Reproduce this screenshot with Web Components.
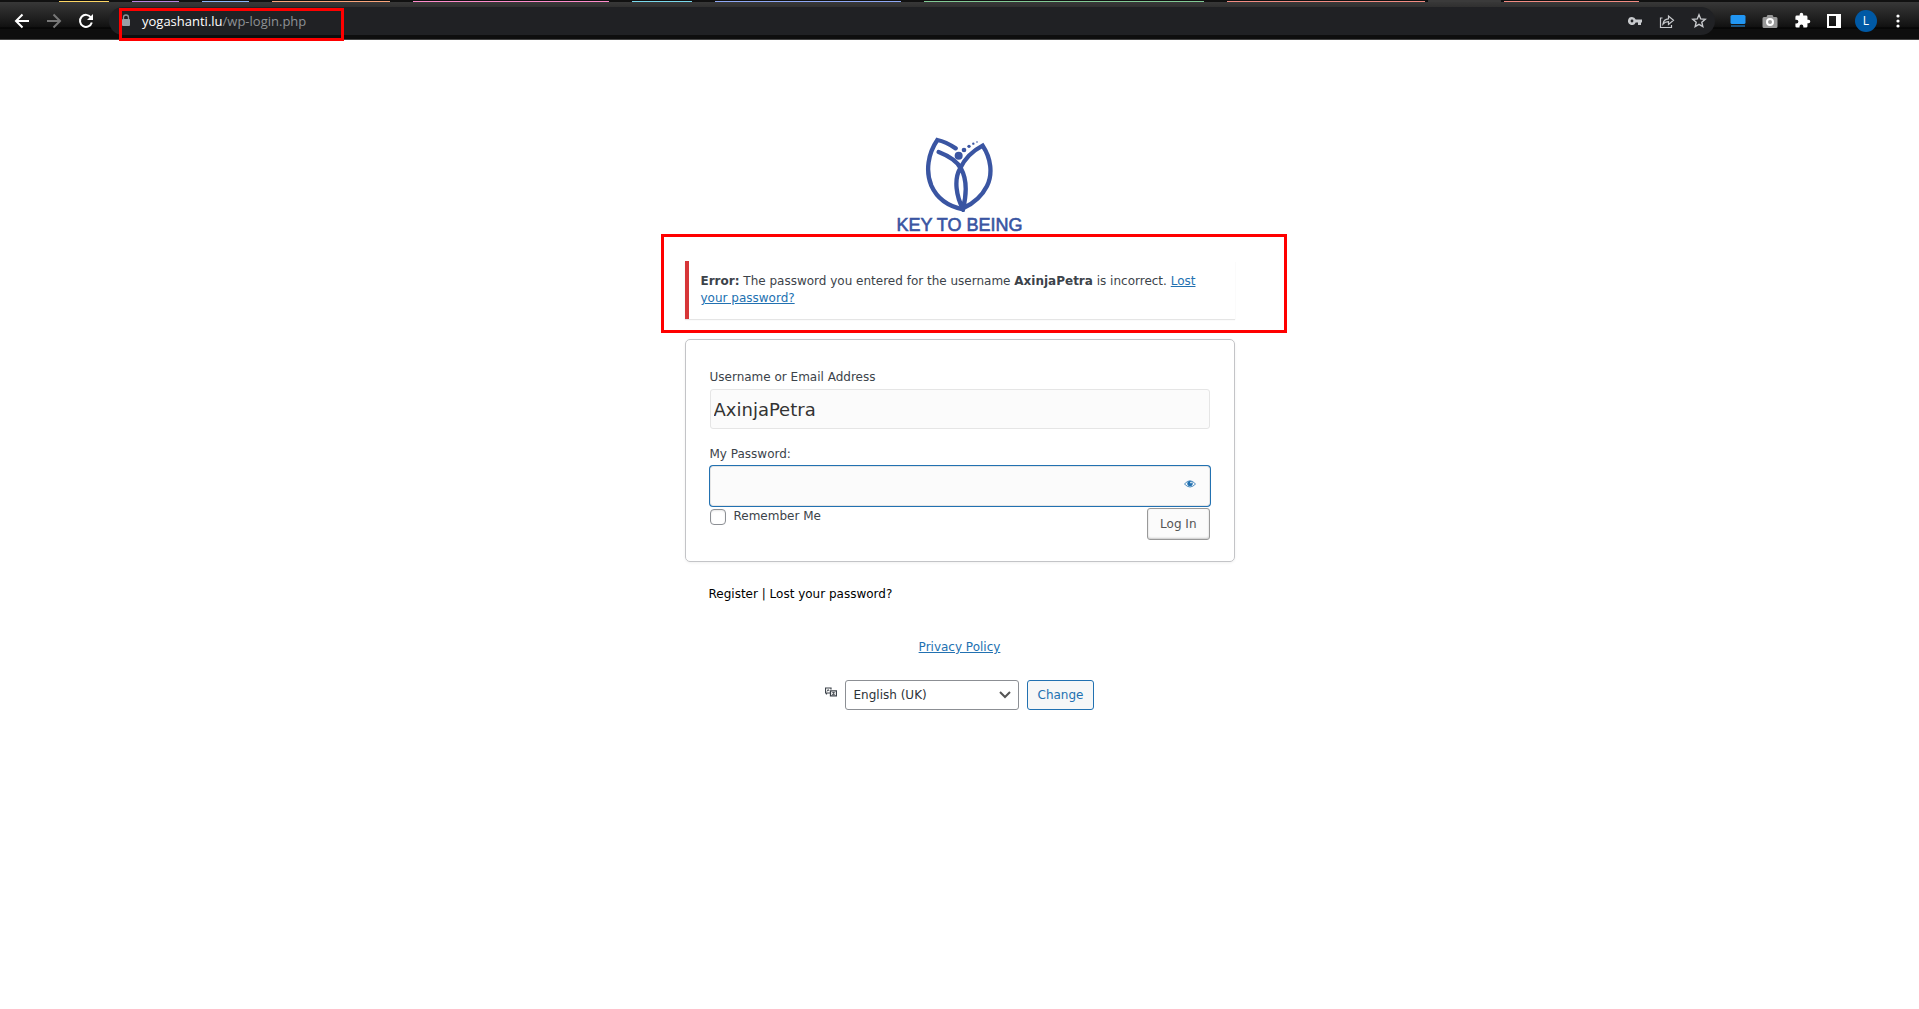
<!DOCTYPE html>
<html lang="en-GB">
<head>
<meta charset="utf-8">
<title>Log In</title>
<style>
	body {
		margin: 0;
		background: #fff;
		color: #3c434a;
		font: 12px/17px "DejaVu Sans", Verdana, sans-serif;
	}
</style>
</head>
<body>
<browser-bar></browser-bar>
<login-page></login-page>

<template id="browser-bar">
	<style>
		:host {
			display: block;
			position: relative;
			background: linear-gradient(#3b3b3b, #111 27px, #000 28px, #0e0e0e 29px);
			border-bottom: 1px solid #444;
		}
		.tabs {
			display: flex;
			gap: 23px;
			height: 2px;
			padding: 0 280px 0 59px;
			background: #111;
		}
		.tabs i { border-bottom: 1px solid var(--c); }
		.tabs .current { background: #3b3b3b; box-shadow: 20px 0 #3b3b3b, -20px 0 #3b3b3b; }
		.bar {
			display: flex;
			align-items: center;
			height: 37px;
			padding: 0 5px 0 12px;
		}
		button {
			display: flex;
			align-items: center;
			justify-content: center;
			width: 32px;
			height: 28px;
			flex: none;
			padding: 0;
			border: 0;
			background: none;
			color: #fff;
		}
		button:first-child { margin-left: -6px; }
		.omnibox {
			display: flex;
			align-items: center;
			flex: 1;
			height: 28px;
			margin: 0 7px;
			padding-left: 11px;
			border-radius: 14px;
			background: #202124;
			color: #c8cacd;
		}
		.omnibox button { color: #c8cacd; }
		.url {
			flex: 1;
			margin-left: 10px;
			color: #8d9195;
			font: 13px/18px "Open Sans", sans-serif;
		}
		.url b { color: #fff; font-weight: 400; }
		.avatar span {
			width: 22px;
			border-radius: 11px;
			background: #0059a5;
			font: 12px/22px "Open Sans", sans-serif;
		}
		.mark {
			position: absolute;
			left: 119px;
			top: 8px;
			width: 219px;
			height: 27px;
			border: 3px solid #f00;
		}
		svg { display: block; }
	</style>
	<div class="tabs">
		<i style="flex:50;--c:#fdd663"></i>
		<i style="flex:47;--c:#b583e0"></i>
		<i style="flex:47;--c:#8ab4f8"></i>
		<i style="flex:119;--c:#fba57b"></i>
		<i style="flex:196;--c:#ff8bcb"></i>
		<i style="flex:61;--c:#78d9ec"></i>
		<i style="flex:186;--c:#8ea8f5"></i>
		<i style="flex:281;--c:#81c995"></i>
		<i style="flex:198;--c:#f28b82"></i>
		<i class="current" style="flex:34;--c:#3b3b3b"></i>
		<i style="flex:135;--c:#f28b82"></i>
	</div>
	<div class="bar">
		<button aria-label="Back"><svg width="16" height="16" viewBox="0 0 16 16" fill="none" stroke="currentColor" stroke-width="2"><path d="M15 8H2M8.500 1.500L2 8l6.500 6.500"/></svg></button>
		<button aria-label="Forward" style="color:#777"><svg width="16" height="16" viewBox="0 0 16 16" fill="none" stroke="currentColor" stroke-width="2"><path d="M1 8h13M7.500 1.500L14 8l-6.500 6.500"/></svg></button>
		<button aria-label="Reload"><svg width="16" height="16" viewBox="0 0 16 16"><path d="M13 4.500A6 6 0 1 0 13.800 9.500" fill="none" stroke="currentColor" stroke-width="2"/><path d="M15 1v6H9z" fill="currentColor"/></svg></button>
		<div class="omnibox">
			<svg width="12" height="14" viewBox="0 0 12 14"><path d="M3.500 6V3.500a2.500 2.500 0 0 1 5 0V6" fill="none" stroke="#8f9499" stroke-width="1.300"/><rect x="2" y="5" width="8" height="7" rx="1" fill="#9aa0a6"/></svg>
			<span class="url"><b>yogashanti.lu</b>/wp-login.php</span>
			<button aria-label="Passwords"><svg width="14" height="8" viewBox="0 0 14 8" fill="currentColor"><path fill-rule="evenodd" d="M4 0a4 4 0 1 0 3.700 5.400H10V8h3V5.400h1V2.600H7.700A4 4 0 0 0 4 0zm0 2.600a1.400 1.400 0 1 1 0 2.800 1.400 1.400 0 0 1 0-2.800z"/></svg></button>
			<button aria-label="Share"><svg width="16" height="16" viewBox="0 0 16 16" fill="none" stroke="currentColor" stroke-width="1.200"><path d="M3.500 5H1.500v9.500h11V12M4 11c.5-3.500 2.500-5 5.500-5.200V3l5 4.300-5 4.200V8.700c-2.500 0-4 .6-5.500 2.300z"/></svg></button>
			<button aria-label="Bookmark"><svg width="16" height="16" viewBox="0 0 16 16" fill="none" stroke="currentColor" stroke-width="1.400"><path d="M8 1.800l1.700 4.100 4.500.4-3.400 2.900 1 4.400L8 11.300l-3.800 2.300 1-4.400-3.400-2.900 4.500-.4z"/></svg></button>
		</div>
		<button aria-label="Screen extension"><svg width="16" height="12" viewBox="0 0 16 12" fill="#2196f3"><rect x=".5" width="15" height="9" rx="1.500"/><path d="M1 10.500h14v1H1z"/></svg></button>
		<button aria-label="Screenshot"><svg width="16" height="14" viewBox="0 0 16 14"><path d="M2 3h2.500l1-2h5l1 2H14a1.500 1.500 0 0 1 1.500 1.500v8A1.500 1.500 0 0 1 14 14H2a1.500 1.500 0 0 1-1.500-1.500v-8A1.500 1.500 0 0 1 2 3z" fill="#999"/><circle cx="8" cy="8" r="3" fill="#999" stroke="#fff" stroke-width="2"/></svg></button>
		<button aria-label="Extensions"><svg width="17" height="17" viewBox="0 0 24 24" fill="currentColor"><path d="M20.500 11H19V7a2 2 0 0 0-2-2h-4V3.500a2.500 2.500 0 0 0-5 0V5H4a2 2 0 0 0-2 2v3.800h1.500a2.700 2.700 0 0 1 0 5.400H2V20a2 2 0 0 0 2 2h3.800v-1.500a2.700 2.700 0 0 1 5.400 0V22H17a2 2 0 0 0 2-2v-4h1.500a2.500 2.500 0 0 0 0-5z"/></svg></button>
		<button aria-label="Side panel"><svg width="14" height="14" viewBox="0 0 14 14"><path fill="currentColor" fill-rule="evenodd" d="M0 0h14v14H0zM2 2v10h7V2z"/></svg></button>
		<button class="avatar" aria-label="Profile"><span>L</span></button>
		<button aria-label="Menu"><svg width="4" height="14" viewBox="0 0 4 14" fill="currentColor"><circle cx="2" cy="2" r="1.600"/><circle cx="2" cy="7" r="1.600"/><circle cx="2" cy="12" r="1.600"/></svg></button>
	</div>
	<div class="mark"></div>
</template>

<template id="site-logo">
	<style>
		:host {
			display: flex;
			flex-direction: column;
			align-items: center;
			color: #3a55a2;
			font: 18px/20px "Liberation Sans", Arial, sans-serif;
			-webkit-text-stroke: 0.6px;
		}
		svg { display: block; margin: 0 2px 3px 0; }
	</style>
	<svg width="68" height="76" viewBox="165 50 204 228" fill="none" stroke="currentColor" stroke-width="13" stroke-linecap="round">
		<path d="M257 87C242 77 222 66 202 62C174 103 166 155 184 199C204 244 244 263 279 270"/>
		<path d="M206 98C237 110 262 126 273 148C290 178 291 220 279 269C259 232 251 181 270 148C284 118 309 94 338 79C363 116 369 164 351 200C335 232 307 254 279 267"/>
		<g fill="currentColor" stroke="none"><circle cx="266" cy="109" r="12"/><circle cx="282" cy="92" r="7"/><circle cx="297" cy="81" r="5"/><circle cx="310" cy="73" r="3.500"/><circle cx="321" cy="68" r="2.500"/></g>
	</svg>
	<span><slot></slot></span>
</template>

<template id="login-notice">
	<style>
		:host {
			display: block;
			position: relative;
			padding: 12px;
			border-left: 4px solid #d63638;
			background: #fff;
			box-shadow: 0 1px 1px rgba(0, 0, 0, .1);
		}
		.mark {
			position: absolute;
			inset: -27px -52px -14px -28px;
			border: 3px solid #f00;
		}
	</style>
	<slot></slot>
	<div class="mark"></div>
</template>

<template id="login-field">
	<style>
		:host { display: block; position: relative; }
		label { display: block; margin-bottom: 3px; }
		input {
			display: block;
			box-sizing: border-box;
			width: 100%;
			height: 40px;
			padding: 0 3px;
			border: 1px solid #e5e5e5;
			border-radius: 3px;
			outline: 0;
			background: #fbfbfb;
			color: #333;
			font: 18px/24px "DejaVu Sans", Verdana, sans-serif;
		}
		:host([active]) input { box-shadow: 0 0 0 1px #2271b1; }
		/* reveal button sits on top of the password box */
		::slotted(button) {
			position: absolute;
			right: 0;
			bottom: 2px;
			width: 40px;
			height: 40px;
			padding: 0;
			border: 0;
			background: none;
			color: #2271b1;
		}
	</style>
	<label for="input"></label>
	<input id="input">
	<slot></slot>
</template>

<template id="login-form">
	<style>
		form {
			display: block;
			padding: 29px 24px 21px;
			border: 1px solid #c3c4c7;
			border-radius: 5px;
			box-shadow: 0 1px 3px rgba(0, 0, 0, .06);
		}
		login-field + login-field { margin-top: 17px; }
		.row { display: flex; justify-content: space-between; margin-top: 2px; }
		.remember { display: flex; align-items: flex-start; gap: 8px; }
		.remember input {
			appearance: none;
			width: 16px;
			height: 16px;
			margin: 1px 0 0;
			border: 1px solid #8c8f94;
			border-radius: 4px;
			background: #fff;
			box-shadow: inset 0 1px 2px rgba(0, 0, 0, .1);
		}
		.submit {
			height: 32px;
			padding: 0 12px;
			border: 1px solid #999;
			border-radius: 3px;
			background: #fbfbfb;
			box-shadow: inset 0 -1px 2px rgba(0, 0, 0, .2);
			color: #555;
			font: inherit;
		}
		svg { display: block; margin: auto; }
	</style>
	<form onsubmit="return false">
		<login-field label="Username or Email Address" value="AxinjaPetra"></login-field>
		<login-field label="My Password:" type="password" active>
			<button type="button" aria-label="Show password"><svg width="12" height="8" viewBox="0 0 12 8"><path d="M.5 4Q6-2.500 11.500 4Q6 10 .5 4z" fill="none" stroke="currentColor" stroke-width=".8"/><circle cx="6" cy="3.600" r="2.700" fill="currentColor"/><circle cx="7" cy="2.600" r=".8" fill="#fff"/></svg></button>
		</login-field>
		<div class="row">
			<div class="remember"><input type="checkbox" id="remember"><label for="remember">Remember Me</label></div>
			<button class="submit">Log In</button>
		</div>
	</form>
</template>

<template id="language-switcher">
	<style>
		:host { display: flex; justify-content: center; gap: 8px; }
		label { margin-top: 7px; color: #3c434a; }
		.box { display: grid; align-items: center; }
		select, .box svg { grid-area: 1 / 1; }
		.box svg { justify-self: end; margin-right: 8px; pointer-events: none; }
		select {
			appearance: none;
			width: 174px;
			height: 30px;
			padding: 0 24px 0 8px;
			border: 1px solid #8c8f94;
			border-radius: 3px;
			background: #fff;
			color: #2c3338;
			font: inherit;
		}
		button {
			height: 30px;
			padding: 0 10px;
			border: 1px solid #2271b1;
			border-radius: 3px;
			background: #f6f7f7;
			color: #2271b1;
			font: inherit;
		}
		svg { display: block; }
	</style>
	<label for="locale" aria-label="Language"><svg width="12" height="10" viewBox="0 0 12 10" fill="none" stroke="currentColor"><path d="M5 6H.5V1H6v1.500M1.500 6v1.500" stroke-width="1.200"/><path d="M2 4.500L3.200 2.500L4 4" stroke-width=".9"/><path d="M5.500 3.800h6v5h-6z" stroke-width="1.300"/><path d="M7 5.700h3M7 7.500l3-.2M8.500 5v2.500" stroke-width=".8"/></svg></label>
	<div class="box">
		<select id="locale"><option>English (UK)</option></select>
		<svg width="12" height="8" viewBox="0 0 12 8" fill="none" stroke="#555" stroke-width="2"><path d="M1 1l5 5 5-5"/></svg>
	</div>
	<button type="button">Change</button>
</template>

<template id="login-page">
	<style>
		:host {
			display: block;
			max-width: 550px;
			margin: 0 auto;
			padding: 96px 16px 40px;
		}
		a { color: #2271b1; }
		login-notice { margin: 26px 0 20px; }
		nav { margin: 24px 24px 0; color: #000; }
		nav a { color: #000; text-decoration: none; }
		.privacy { margin: 36px 0 24px; text-align: center; }
	</style>
	<site-logo>KEY TO BEING</site-logo>
	<login-notice><strong>Error:</strong> The password you entered for the username <strong>AxinjaPetra</strong> is incorrect. <a href="#lost">Lost your password?</a></login-notice>
	<login-form></login-form>
	<nav><a href="#register">Register</a> | <a href="#lost">Lost your password?</a></nav>
	<div class="privacy"><a href="#privacy">Privacy Policy</a></div>
	<language-switcher></language-switcher>
</template>

<script>
	class TemplateElement extends HTMLElement {
		constructor() {
			super();
			const template = document.getElementById(this.localName);
			this.attachShadow({mode: 'open'}).appendChild(template.content.cloneNode(true));
		}
	}

	class LoginField extends TemplateElement {
		connectedCallback() {
			const input = this.shadowRoot.getElementById('input');
			this.shadowRoot.querySelector('label').textContent = this.getAttribute('label');
			input.type = this.getAttribute('type') || 'text';
			input.value = this.getAttribute('value') || '';
		}
	}

	customElements.define('browser-bar', class extends TemplateElement {});
	customElements.define('site-logo', class extends TemplateElement {});
	customElements.define('login-notice', class extends TemplateElement {});
	customElements.define('login-field', LoginField);
	customElements.define('login-form', class extends TemplateElement {});
	customElements.define('language-switcher', class extends TemplateElement {});
	customElements.define('login-page', class extends TemplateElement {});
</script>
</body>
</html>
